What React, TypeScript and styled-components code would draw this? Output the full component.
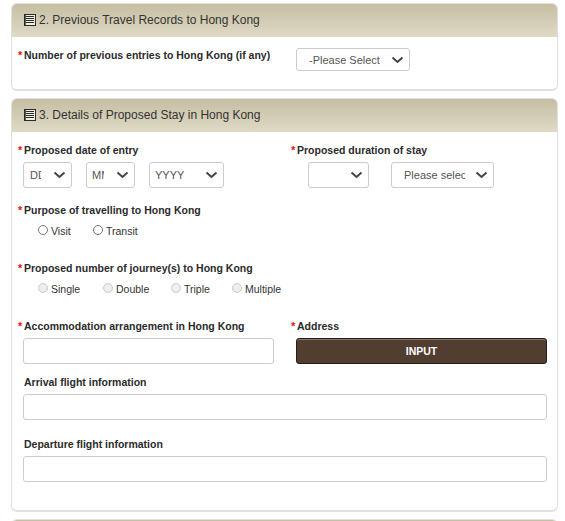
import styled, { createGlobalStyle } from "styled-components";
import React from "react";

const GlobalStyle = createGlobalStyle`
  html, body {
    margin: 0;
    padding: 0;
    background: #fff;
    overflow: hidden;
  }
  body {
    font-family: "Liberation Sans", Arial, sans-serif;
    font-size: 12px;
    color: #333;
  }
`;

const Page = styled.div`
  width: 565px;
  height: 521px;
  overflow: hidden;
  padding: 3px 7px 0 11px;
  box-sizing: border-box;
`;

const Panel = styled.section<{ $height: number }>`
  height: ${(p) => p.$height}px;
  box-sizing: border-box;
  border: 1px solid #e0e0e0;
  border-bottom-width: 2px;
  border-radius: 6px;
  margin-bottom: 7px;
  overflow: hidden;
  background: #fff;
`;

const PanelHeader = styled.h2`
  display: flex;
  align-items: center;
  gap: 3px;
  height: 33px;
  box-sizing: border-box;
  margin: 0;
  padding: 0 0 2px 12px;
  background: linear-gradient(to bottom, #c5bea2, #dfdac6);
  font-size: 12px;
  font-weight: 400;
  color: #333;
`;

const PanelBody = styled.div`
  padding: 0 10px 0 6px;
`;

const Row = styled.div<{ $top: number; $columns?: string }>`
  display: grid;
  grid-template-columns: ${(p) => p.$columns || "273px 1fr"};
  margin-top: ${(p) => p.$top}px;
`;

const Label = styled.label<{ $required?: boolean }>`
  display: block;
  position: relative;
  padding-left: 6px;
  font-size: 10.5px;
  line-height: 14px;
  font-weight: 700;
  color: #2b2b2b;

  ${(p) =>
    p.$required &&
    `&::before {
      content: "*";
      position: absolute;
      left: 0;
      top: 0;
      color: #e81010;
      font-size: 11px;
    }`}
`;

const SelectRow = styled.div<{ $left?: number }>`
  display: flex;
  margin-left: ${(p) => p.$left ?? 5}px;
  margin-top: 5px;
`;

const SelectWrap = styled.div<{ $width: number; $height?: number; $after?: number; $before?: number }>`
  position: relative;
  width: ${(p) => p.$width}px;
  height: ${(p) => p.$height ?? 26}px;
  margin-left: ${(p) => p.$before ?? 0}px;
  margin-right: ${(p) => p.$after ?? 0}px;
  flex: none;
`;

const NativeSelect = styled.select<{ $pad: number; $right: number }>`
  appearance: none;
  width: 100%;
  height: 100%;
  box-sizing: border-box;
  border: 1px solid #ccc;
  border-radius: 3px;
  background: #fff;
  padding: 0 ${(p) => p.$right}px 0 ${(p) => p.$pad}px;
  font-family: inherit;
  font-size: 11px;
  color: #555;
`;

const Chevron = styled.svg`
  position: absolute;
  right: 6px;
  top: 50%;
  width: 13px;
  height: 8px;
  margin-top: -4px;
  pointer-events: none;
`;

const RadioGroup = styled.div`
  display: flex;
  margin: 7px 0 0 20px;
`;

const RadioOption = styled.label<{ $width: number }>`
  display: flex;
  align-items: center;
  gap: 3px;
  width: ${(p) => p.$width}px;
  height: 14px;
  font-size: 10.5px;
  color: #333;
`;

const RadioInput = styled.input`
  appearance: none;
  width: 10px;
  height: 10px;
  margin: 0 0 2px;
  flex: none;
  border: 1px solid #767676;
  border-radius: 50%;
  background: #fff;

  &:disabled {
    border-color: #ccc;
    background: #eee;
  }
`;

const TextField = styled.input`
  display: block;
  width: 100%;
  height: 26px;
  box-sizing: border-box;
  border: 1px solid #ccc;
  border-radius: 3px;
  background: #fff;
`;

const FieldBox = styled.div`
  margin: 5px 0 0 5px;
`;

const AddressColumn = styled.div`
  margin-left: 17px;
`;

const InputButton = styled.button`
  display: block;
  width: 100%;
  height: 26px;
  box-sizing: border-box;
  border: 1px solid #2a1c12;
  border-radius: 3px;
  background: #523e31;
  box-shadow: inset 0 1px 0 #8a7868;
  color: #fff;
  font-family: inherit;
  font-size: 10.5px;
  font-weight: 700;
`;

const ListIcon = () => (
  <svg width="12" height="12" viewBox="0 0 12 12">
    <rect x="0.5" y="0.5" width="11" height="11" fill="#f1eee2" stroke="#2b2b2b" />
    <path d="M2 2.5h8M2 4.5h8M2 6.5h8M2 8.5h8" stroke="#2b2b2b" strokeWidth="1" />
    <path d="M1.5 1v10" stroke="#5c5c50" strokeWidth="1" />
  </svg>
);

interface DropdownProps {
  width: number;
  height?: number;
  before?: number;
  after?: number;
  pad?: number;
  right?: number;
  text?: string;
}

const Dropdown: React.FC<DropdownProps> = ({ width, height, before, after, pad = 12, right = 30, text }) => (
  <SelectWrap $width={width} $height={height} $before={before} $after={after}>
    <NativeSelect $pad={pad} $right={right}>
      <option>{text}</option>
    </NativeSelect>
    <Chevron viewBox="0 0 13 8">
      <path d="M1.5 1.5 6.5 6 11.5 1.5" fill="none" stroke="#444" strokeWidth="2" />
    </Chevron>
  </SelectWrap>
);

const App = () => (
  <Page>
    <GlobalStyle />
    <Panel $height={88}>
      <PanelHeader>
        <ListIcon />
        2. Previous Travel Records to Hong Kong
      </PanelHeader>
      <PanelBody>
        <Row $top={11}>
          <Label $required>Number of previous entries to Hong Kong (if any)</Label>
          <Dropdown width={114} height={23} before={5} right={29} text="-Please Select-" />
        </Row>
      </PanelBody>
    </Panel>

    <Panel $height={414}>
      <PanelHeader>
        <ListIcon />
        3. Details of Proposed Stay in Hong Kong
      </PanelHeader>
      <PanelBody>
        <Row $top={11}>
          <div>
            <Label $required>Proposed date of entry</Label>
            <SelectRow>
              <Dropdown width={49} after={14} pad={6} text="DD" />
              <Dropdown width={49} after={14} pad={5} text="MM" />
              <Dropdown width={75} pad={5} text="YYYY" />
            </SelectRow>
          </div>
          <div>
            <Label $required>Proposed duration of stay</Label>
            <SelectRow $left={17}>
              <Dropdown width={61} after={22} />
              <Dropdown width={103} right={28} text="Please select" />
            </SelectRow>
          </div>
        </Row>

        <Row $top={15} $columns="1fr">
          <div>
            <Label $required>Purpose of travelling to Hong Kong</Label>
            <RadioGroup>
              <RadioOption $width={55}>
                <RadioInput type="radio" name="purpose" />
                Visit
              </RadioOption>
              <RadioOption $width={55}>
                <RadioInput type="radio" name="purpose" />
                Transit
              </RadioOption>
            </RadioGroup>
          </div>
        </Row>

        <Row $top={23} $columns="1fr">
          <div>
            <Label $required>Proposed number of journey(s) to Hong Kong</Label>
            <RadioGroup>
              <RadioOption $width={65}>
                <RadioInput type="radio" name="journey" disabled />
                Single
              </RadioOption>
              <RadioOption $width={68}>
                <RadioInput type="radio" name="journey" disabled />
                Double
              </RadioOption>
              <RadioOption $width={61}>
                <RadioInput type="radio" name="journey" disabled />
                Triple
              </RadioOption>
              <RadioOption $width={60}>
                <RadioInput type="radio" name="journey" disabled />
                Multiple
              </RadioOption>
            </RadioGroup>
          </div>
        </Row>

        <Row $top={23} $columns="256px 273px">
          <div>
            <Label $required>Accommodation arrangement in Hong Kong</Label>
            <FieldBox>
              <TextField type="text" />
            </FieldBox>
          </div>
          <AddressColumn>
            <Label $required>Address</Label>
            <FieldBox>
              <InputButton type="button">INPUT</InputButton>
            </FieldBox>
          </AddressColumn>
        </Row>

        <Row $top={11} $columns="1fr">
          <div>
            <Label>Arrival flight information</Label>
            <FieldBox>
              <TextField type="text" />
            </FieldBox>
          </div>
        </Row>

        <Row $top={17} $columns="1fr">
          <div>
            <Label>Departure flight information</Label>
            <FieldBox>
              <TextField type="text" />
            </FieldBox>
          </div>
        </Row>
      </PanelBody>
    </Panel>

    <Panel $height={40}>
      <PanelHeader />
    </Panel>
  </Page>
);

export default App;
